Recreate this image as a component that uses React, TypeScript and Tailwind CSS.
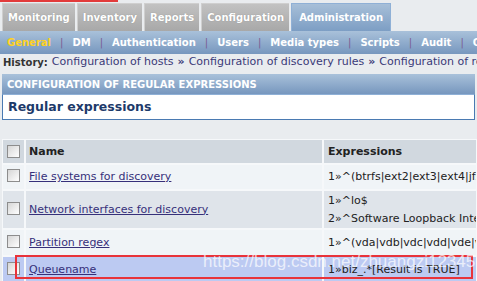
const TABS = ["Monitoring", "Inventory", "Reports", "Configuration"];
const SUBNAV = ["DM", "Authentication", "Users", "Media types", "Scripts", "Audit", "Queue"];

const HISTORY = [
  "Configuration of hosts",
  "Configuration of discovery rules",
  "Configuration of regular expressions",
];

type Row = {
  name: string;
  expressions: string[];
  tone: string;
  height: string;
};

const ROWS: Row[] = [
  {
    name: "File systems for discovery",
    expressions: ["1»^(btrfs|ext2|ext3|ext4|jfs|reiser|xfs|ffs|ufs)$"],
    tone: "bg-[#f0f4f7]",
    height: "h-[24px]",
  },
  {
    name: "Network interfaces for discovery",
    expressions: ["1»^lo$", "2»^Software Loopback Interface"],
    tone: "bg-[#dfe4ea]",
    height: "h-[37px]",
  },
  {
    name: "Partition regex",
    expressions: ["1»^(vda|vdb|vdc|vdd|vde|vdf)$"],
    tone: "bg-[#f0f4f7]",
    height: "h-[25px]",
  },
  {
    name: "Queuename",
    expressions: ["1»biz_.*[Result is TRUE]"],
    tone: "bg-[#bccaf2]",
    height: "h-[25px]",
  },
];

function Checkbox() {
  return (
    <span className="block h-[13px] w-[13px] border border-[#8d8d8d] bg-linear-to-br from-[#d6d6d6] to-[#ffffff]" />
  );
}

export default function App() {
  return (
    <div className="relative h-[281px] w-[477px] overflow-hidden bg-[#e9ecef] font-['DejaVu_Sans',sans-serif] text-[11px] text-[#222]">
      <div className="h-[2px] w-[118px] bg-[#e23b3b]" />

      {/* top tabs */}
      <div className="flex h-[29px] gap-[2px] pl-[2px] pt-[1px] text-[10px]">
        {TABS.map((tab) => (
          <div
            key={tab}
            className="flex items-center border-t border-l border-[#cfcfcf] bg-linear-to-b from-[#c2c2c2] to-[#a8a8a8] px-[5px] font-bold text-white [text-shadow:0_0_1px_#888]"
          >
            {tab}
          </div>
        ))}
        <div className="flex items-center border border-b-0 border-[#8fb0d6] bg-linear-to-b from-[#a7bfd8] to-[#7d9ec4] px-[7px] font-bold text-white">
          Administration
        </div>
      </div>

      {/* sub navigation */}
      <div className="flex h-[23px] items-center bg-linear-to-b from-[#a9c1da] to-[#7797be] pl-[7px] text-[10px] font-bold whitespace-nowrap text-white">
        <span className="text-[#ffd21f]">General</span>
        {SUBNAV.map((item) => (
          <span key={item} className="flex items-center">
            <span className="mx-[9px] font-normal text-[#7b5c92]">|</span>
            {item}
          </span>
        ))}
      </div>

      {/* history */}
      <div className="flex h-[17px] items-center gap-[4px] pl-[3px] whitespace-nowrap text-[#3a3a78]">
        <span className="text-[10px] font-bold text-[#333]">History:</span>
        {HISTORY.map((h, i) => (
          <span key={h} className="flex items-center gap-[4px]">
            {i > 0 ? <span className="font-bold text-[#3a3a78]">»</span> : null}
            {h}
          </span>
        ))}
      </div>

      <div className="px-[2px] pt-[3px]">
        <div className="flex h-[20px] items-center bg-linear-to-b from-[#a9c1da] to-[#7797be] pl-[5px] text-[10px] font-bold text-white">
          CONFIGURATION OF REGULAR EXPRESSIONS
        </div>
        <div className="flex h-[26px] items-center border border-[#4a7ab2] border-t-[#8fb0d6] bg-white pl-[5px] text-[12.5px] font-bold text-[#1d3a6a]">
          Regular expressions
        </div>
      </div>

      {/* table */}
      <div className="mt-[19px] ml-[2px] flex flex-col gap-[2px] bg-[#f6f8fa] p-px leading-[12px]">
        <div className="flex h-[23px] gap-[2px]">
          <div className="flex w-[21px] items-center justify-center bg-[#d1d8df]">
            <Checkbox />
          </div>
          <div className="flex w-[296px] items-center bg-[#d1d8df] pl-[3px] font-bold text-[#222]">
            Name
          </div>
          <div className="flex flex-1 items-center bg-[#d1d8df] pl-[4px] font-bold text-[#222]">
            Expressions
          </div>
        </div>
        {ROWS.map((row) => (
          <div key={row.name} className={`flex gap-[2px] ${row.height}`}>
            <div className={`flex w-[21px] items-center justify-center pb-[3px] ${row.tone}`}>
              <Checkbox />
            </div>
            <div className={`flex w-[296px] items-center pl-[3px] ${row.tone}`}>
              <a className="text-[#36307a] underline">{row.name}</a>
            </div>
            <div className={`flex flex-1 flex-col justify-center gap-[6px] overflow-hidden pl-[4px] whitespace-nowrap ${row.tone}`}>
              {row.expressions.map((e) => (
                <span key={e}>{e}</span>
              ))}
            </div>
          </div>
        ))}
      </div>

      {/* annotation box + watermark */}
      <div className="absolute top-[255px] left-[15px] h-[24px] w-[458px] border-[2px] border-[#e8333a]" />
      <div className="absolute top-[249px] left-[203px] font-['Liberation_Sans',sans-serif] text-[17px] text-white/70">
        https://blog.csdn.net/zhuangzi123456
      </div>
    </div>
  );
}
